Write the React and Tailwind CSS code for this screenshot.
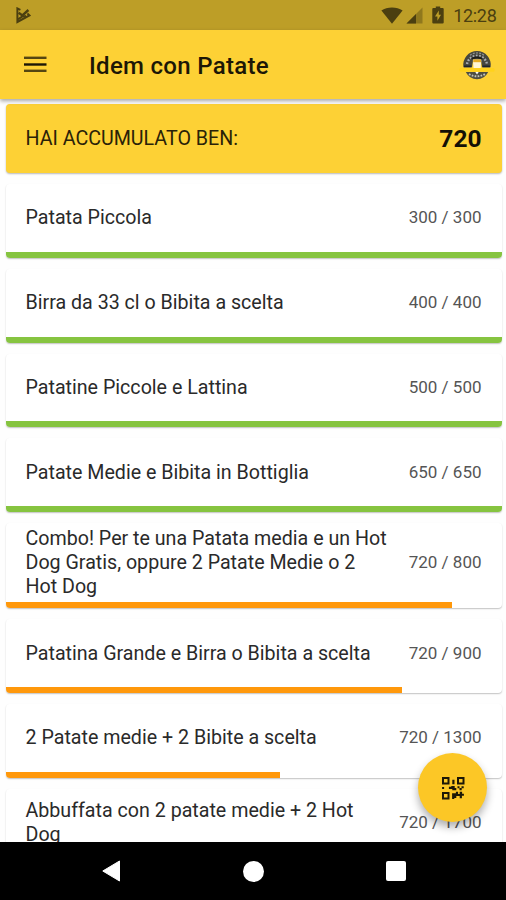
const TOTAL = 720;

const rewards = [
  { title: 'Patata Piccola', goal: 300 },
  { title: 'Birra da 33 cl o Bibita a scelta', goal: 400 },
  { title: 'Patatine Piccole e Lattina', goal: 500 },
  { title: 'Patate Medie e Bibita in Bottiglia', goal: 650 },
  { title: 'Combo! Per te una Patata media e un Hot\nDog Gratis, oppure 2 Patate Medie o 2\nHot Dog', goal: 800 },
  { title: 'Patatina Grande e Birra o Bibita a scelta', goal: 900 },
  { title: '2 Patate medie + 2 Bibite a scelta', goal: 1300 },
  { title: 'Abbuffata con 2 patate medie + 2 Hot\nDog', goal: 1700 },
];

function StatusBar() {
  return (
    <div className="h-[30px] shrink-0 bg-[#bd9e27] flex items-center pl-4 pr-[9.5px] text-[#4b3f10]">
      <svg width="15" height="17" viewBox="0 0 15 17" fill="none" stroke="currentColor">
        <path d="M4.4 2.8 L1.4 1.4 V15 L13.4 8.4 L11.4 6.6" strokeWidth="2" />
        <path d="M2.6 5.8 L6.4 8.4 L12.4 3" strokeWidth="2.4" />
        <path d="M2 12.4 L6 9.6 L10 9" strokeWidth="2" />
      </svg>
      <div className="ml-auto flex items-center">
        <svg width="22" height="17" viewBox="0 0 22 17" fill="currentColor">
          <path d="M11 16.8 L0.4 3.6 C6 -0.6 16 -0.6 21.6 3.6 Z" />
        </svg>
        <svg className="ml-[3px]" width="17" height="17" viewBox="0 0 17 17" fill="currentColor">
          <path opacity="0.4" d="M0.5 16.5 L16.5 0.5 V16.5 Z" />
          <path d="M0.5 16.5 L10 7 V16.5 Z" />
        </svg>
        <svg className="ml-[9px]" width="12" height="18" viewBox="0 0 12 18" fill="currentColor">
          <path fillRule="evenodd" d="M3.8 0.4 H8.2 V2 H10.6 Q11.7 2 11.7 3.1 V16.4 Q11.7 17.5 10.6 17.5 H1.4 Q0.3 17.5 0.3 16.4 V3.1 Q0.3 2 1.4 2 H3.8 Z M6.8 4.6 L3 10.6 H5.4 V14.8 L9 8.8 H6.8 Z" />
        </svg>
        <span className="ml-[9px] mt-px text-[18px] leading-none tracking-[-0.3px]">12:28</span>
      </div>
    </div>
  );
}

function MenuIcon() {
  return (
    <svg width="23" height="17" viewBox="0 0 23 17" fill="#1c1706">
      <rect y="0.6" width="22.5" height="2.4" opacity="0.75" />
      <rect y="7.3" width="22.5" height="2.4" />
      <rect y="13.6" width="22.5" height="2.4" opacity="0.75" />
    </svg>
  );
}

function Logo() {
  return (
    <svg width="36" height="30" viewBox="0 0 36 30">
      <path d="M4.4 17.2 A13.8 13.8 0 1 1 31.6 17.2 H23 L22 10.5 H14 L13 17.2 Z" fill="#45463f" />
      <path d="M8 14 A10.2 10.2 0 0 1 28 14" fill="none" stroke="#a9adb4" strokeWidth="2.4" strokeDasharray="1.7 1.5" />
      <path d="M11 5.2 A12 12 0 0 1 25 5.2" fill="none" stroke="#8f938f" strokeWidth="1.2" strokeDasharray="2 1.2" />
      <path d="M12.5 9 Q18 5.5 23.5 9" fill="none" stroke="#1d1e1a" strokeWidth="1.8" />
      <path d="M5 16.3 H12.4 M23.6 16.3 H31" stroke="#1d2430" strokeWidth="1.8" />
      <path d="M13.8 9.5 H22.4 L21.6 18.6 H14.6 Z" fill="#fff6d6" />
      <path d="M14.2 9.4 H22 V12.2 H14.2 Z" fill="#e8ad22" />
      <rect x="0.5" y="18" width="35" height="3.8" rx="1.2" fill="#ffd21c" />
      <path d="M6.8 22 H29.2 Q25.5 29.3 18 29.3 Q10.5 29.3 6.8 22 Z" fill="#4e4e44" />
      <path d="M10 24 Q18 28.6 26 24" fill="none" stroke="#c3c4bb" strokeWidth="1.9" strokeDasharray="1.7 1.3" />
      <path d="M16.3 22 H19.7 L18 24.4 Z" fill="#fff" />
    </svg>
  );
}

function QrIcon() {
  return (
    <svg width="34" height="34" viewBox="0.5 0.5 34 34" fill="#1c1706">
      <g fill="none" stroke="#1c1706" strokeWidth="2">
        <rect x="7.5" y="7.5" width="5.5" height="5.5" />
        <rect x="22.5" y="7.5" width="5.5" height="5.5" />
        <rect x="7.5" y="22.5" width="5.5" height="5.5" />
      </g>
      <path d="M16.8 9.2 h2.2 v4.6 h-2.2z M6.6 16.5 h2 v2 h-2z M13.4 16.2 h2.4 v-0.8 h3.4 v2 h1.6 v2.4 h-4 v-1.2 h-3.4z" />
      <path d="M22 15.8 h2 v1.8 h2 v-1.8 h2.2 v2 h-2 v2 h-2.2 v-2 h-2z" />
      <path d="M16.6 22.8 h3.8 v-1.6 h2.2 v2.2 h1.6 v-2.2 h2.4 v2 h1.8 v2 h-2 v2.6 h-2.2 v-2.4 h-3.4 v2 h-2 v1.2 h-2.2z" />
    </svg>
  );
}

function Header() {
  return (
    <header className="relative z-10 h-[69px] shrink-0 bg-[#fdd135] flex items-center pl-6 pr-[11px] shadow-[0_2px_4px_rgba(0,0,0,0.35)]">
      <MenuIcon />
      <h1 className="ml-[42px] mt-[2px] text-[24px] tracking-[0.3px] font-medium leading-none text-[#1c1706]">Idem con Patate</h1>
      <div className="ml-auto">
        <Logo />
      </div>
    </header>
  );
}

function RewardCard({ title, goal }) {
  const done = TOTAL >= goal;
  const points = done ? goal : TOTAL;

  return (
    <div className="shrink-0 rounded bg-white overflow-hidden shadow-[0_1px_1.5px_rgba(0,0,0,0.24)]">
      <div className="min-h-[67.8px] px-5 pt-[4.2px] pb-[3.8px] flex items-center justify-between">
        <p className="whitespace-pre text-[19.65px] leading-[23.7px] text-[#2a2a2a]">{title}</p>
        <p className="-mt-[1.5px] whitespace-nowrap text-[17px] leading-5 text-[#555]">{points} / {goal}</p>
      </div>
      <div className={`h-[6px] ${done ? 'bg-[#86c440]' : 'bg-[#ff980b]'}`} style={{ width: `${(points / goal) * 100}%` }}></div>
    </div>
  );
}

function NavBar() {
  return (
    <nav className="h-[58px] shrink-0 bg-black flex items-center justify-between pl-[102px] pr-[100px]">
      <svg width="19" height="22" viewBox="0 0 19 22">
        <path d="M17.5 1 V21 L0.8 11 Z" fill="#fff" stroke="#fff" strokeLinejoin="round" />
      </svg>
      <div className="w-[21px] h-[21px] rounded-full bg-white"></div>
      <div className="w-5 h-5 rounded-[2px] bg-white"></div>
    </nav>
  );
}

export default function App() {
  return (
    <div className="relative w-[506px] h-[900px] overflow-hidden flex flex-col bg-[#fefefe] font-[Roboto,sans-serif]">
      <StatusBar />
      <Header />
      <main className="flex-1 min-h-0 overflow-hidden flex flex-col gap-[11px] pt-[5px] pl-[5.5px] pr-[4.5px]">
        <div className="h-[69px] shrink-0 rounded bg-[#fdd135] px-5 flex items-center justify-between shadow-[0_1px_2px_rgba(0,0,0,0.28)]">
          <p className="text-[19.65px] text-[#2a2208]">HAI ACCUMULATO BEN:</p>
          <p className="mt-px text-[24.5px] font-bold text-[#141005]">{TOTAL}</p>
        </div>
        {rewards.map((reward) => (
          <RewardCard key={reward.goal} title={reward.title} goal={reward.goal} />
        ))}
      </main>
      <NavBar />

      {/* Scan button floats over the list */}
      <button className="absolute left-[418px] top-[753px] w-[69px] h-[69px] rounded-full bg-[#fcc726] flex items-center justify-center shadow-[0_5px_9px_rgba(0,0,0,0.32)]">
        <QrIcon />
      </button>
    </div>
  );
}
